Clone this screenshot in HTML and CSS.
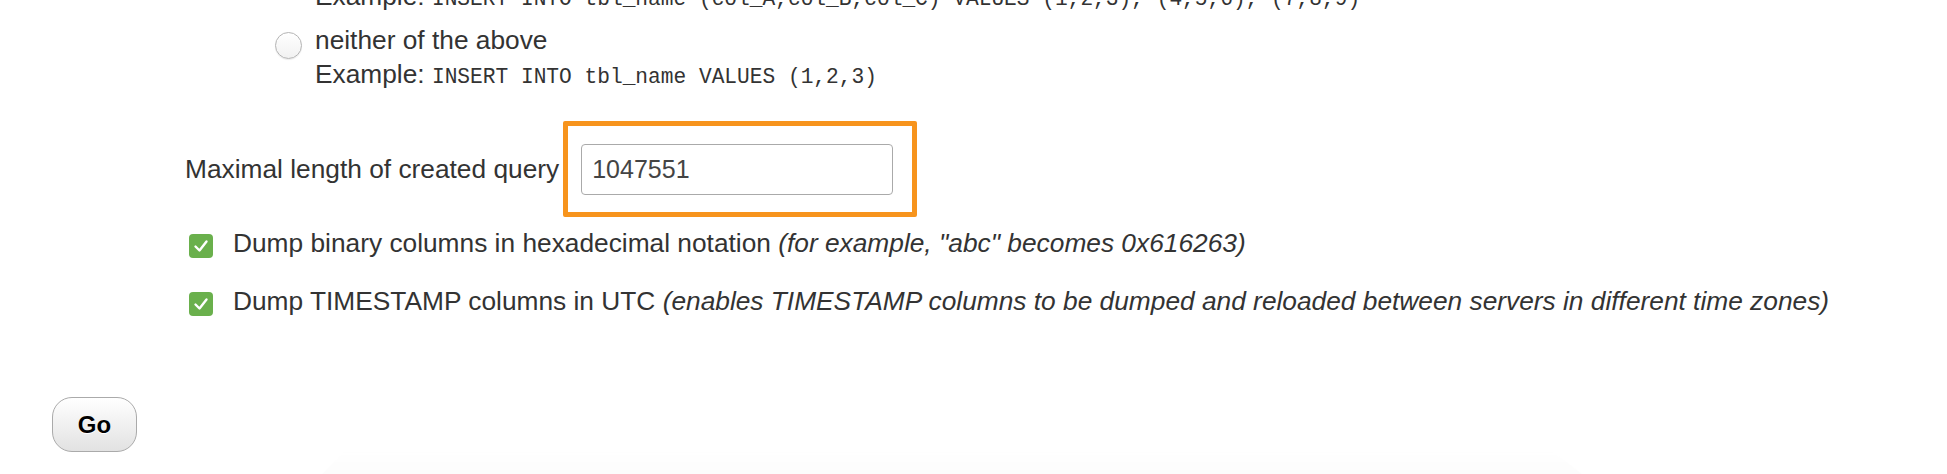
FILE: index.html
```html
<!DOCTYPE html>
<html lang="en">
<head>
<meta charset="utf-8">
<title>Export options</title>
<link rel="stylesheet" href="styles.css">
</head>
<body>
<div class="form">
  <div class="example example-cut">Example: <code>INSERT INTO tbl_name (col_A,col_B,col_C) VALUES (1,2,3), (4,5,6), (7,8,9)</code></div>
  <div class="radio-row">
    <span class="radio"></span>
    <div class="radio-text">
      <div class="radio-label">neither of the above</div>
      <div class="example">Example: <code>INSERT INTO tbl_name VALUES (1,2,3)</code></div>
    </div>
  </div>
  <div class="query-row">
    <label class="query-label" for="maxq">Maximal length of created query</label>
    <span class="highlight"><input id="maxq" class="text-input" type="text" value="1047551"></span>
  </div>
  <div class="check-row">
    <span class="checkbox"><svg viewBox="0 0 24 24" width="24" height="24"><path d="M6.5 12.5 L10.5 16.5 L17.5 7.5" fill="none" stroke="#fff" stroke-width="2.4" stroke-linecap="round" stroke-linejoin="round"/></svg></span>
    <span class="check-text">Dump binary columns in hexadecimal notation <i>(for example, "abc" becomes 0x616263)</i></span>
  </div>
  <div class="check-row second">
    <span class="checkbox"><svg viewBox="0 0 24 24" width="24" height="24"><path d="M6.5 12.5 L10.5 16.5 L17.5 7.5" fill="none" stroke="#fff" stroke-width="2.4" stroke-linecap="round" stroke-linejoin="round"/></svg></span>
    <span class="check-text">Dump TIMESTAMP columns in UTC <i>(enables TIMESTAMP columns to be dumped and reloaded between servers in different time zones)</i></span>
  </div>
</div>
<div class="go-row">
  <button class="go" type="button">Go</button>
  <div class="tray"></div>
</div>
</body>
</html>
```

FILE: styles.css
```css
html, body {
  margin: 0;
  padding: 0;
  background: #fff;
}

body {
  font-family: "Liberation Sans", Arial, Helvetica, sans-serif;
  font-size: 26.3px;
  line-height: 30px;
  color: #333;
  height: 474px;
  overflow: hidden;
}

.form {
  padding-left: 185px;
}

code {
  font-family: "Liberation Mono", "Courier New", monospace;
  font-size: 21.2px;
  line-height: 1;
  color: #333;
}

.example {
  white-space: nowrap;
}

.example-cut {
  margin-top: -19px;
  padding-left: 130px;
}

.radio-row {
  display: flex;
  align-items: flex-start;
  margin-top: 12px;
  padding-left: 90px;
}

.radio {
  flex: none;
  width: 27px;
  height: 27px;
  box-sizing: border-box;
  border-radius: 50%;
  border: 1px solid #b4b4b4;
  background: linear-gradient(#ffffff, #f1f1f1);
  box-shadow: 0 1px 1px rgba(0, 0, 0, 0.08);
  margin-top: 9px;
  margin-right: 13px;
}

.radio-text {
  line-height: 34px;
}

.query-row {
  display: flex;
  align-items: center;
  margin-top: 30px;
}

.query-label {
  margin-right: 4px;
}

.highlight {
  display: inline-flex;
  border: 5px solid #f7941d;
  border-radius: 2px;
  padding: 18px 19px 17px 13px;
}

.text-input {
  width: 312px;
  height: 51px;
  box-sizing: border-box;
  border: 1.5px solid #aaa;
  border-radius: 4px;
  padding: 0 10px;
  font-family: "Liberation Sans", Arial, sans-serif;
  font-size: 25px;
  color: #444;
  background: #fff;
  outline: none;
}

.check-row {
  display: flex;
  align-items: flex-start;
  margin-top: 11px;
  padding-left: 4px;
  white-space: nowrap;
}

.check-row.second {
  margin-top: 28px;
}

.checkbox {
  flex: none;
  width: 24px;
  height: 24px;
  border-radius: 4px;
  background: #6ab04c;
  margin-top: 6px;
  margin-right: 20px;
  display: flex;
}

.go-row {
  display: flex;
  align-items: flex-start;
  padding-left: 52px;
  margin-top: 81px;
}

.go {
  flex: none;
  width: 85px;
  height: 55px;
  box-sizing: border-box;
  border: 1.5px solid #aaa;
  border-radius: 20px;
  background: linear-gradient(#ffffff, #e2e2e2);
  font-family: "Liberation Sans", Arial, sans-serif;
  font-weight: bold;
  font-size: 24px;
  color: #000;
  text-shadow: 0 1px 0 #fff;
  padding: 0;
  cursor: pointer;
}

.tray {
  flex: none;
  width: 1300px;
  height: 40px;
  margin-left: 168px;
  margin-top: 55px;
  background: linear-gradient(#ffffff, #fafafa);
  clip-path: polygon(3% 0, 96% 0, 100% 100%, 0 100%);
  filter: blur(3px);
}
```
